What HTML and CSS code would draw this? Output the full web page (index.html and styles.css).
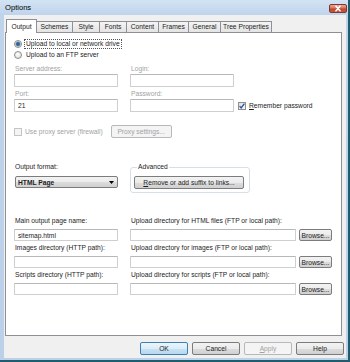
FILE: index.html
```html
<!DOCTYPE html>
<html>
<head>
<meta charset="utf-8">
<link rel="stylesheet" href="styles.css">
</head>
<body>
<div class="window">
  <div class="titlebar">
    <span class="title">Options</span>
    <span class="close"><svg width="18" height="9" viewBox="0 0 18 9"><path d="M7 2.2 L11 6.8 M11 2.2 L7 6.8" stroke="#fff" stroke-width="1.6" stroke-linecap="round"/></svg></span>
  </div>
  <div class="client">
    <div class="tabs">
      <div class="tab sel w-output">Output</div>
      <div class="tab w-schemes">Schemes</div>
      <div class="tab w-style">Style</div>
      <div class="tab w-fonts">Fonts</div>
      <div class="tab w-content">Content</div>
      <div class="tab w-frames">Frames</div>
      <div class="tab w-general">General</div>
      <div class="tab w-tree">Tree Properties</div>
    </div>
    <div class="panel">
      <div class="radios">
        <div class="opt"><span class="radio on"></span><span class="focus">Upload to local or network drive</span></div>
        <div class="opt"><span class="radio"></span><span class="optlabel">Upload to an FTP server</span></div>
      </div>
      <div class="ftp">
        <div class="lbl dis">Server address:</div>
        <div class="lbl dis">Login:</div>
        <div class="box"></div>
        <div class="cell"><div class="box w104"></div></div>
        <div class="lbl dis">Port:</div>
        <div class="lbl dis">Password:</div>
        <div class="box">21</div>
        <div class="cell"><div class="box w104"></div><span class="check on"><svg width="8" height="8" viewBox="0 0 8 8"><path d="M1.6 4.1 L3.2 6 L6.4 1.6" stroke="#2c4f9c" stroke-width="1.3" fill="none"/></svg></span><span class="chklabel"><u>R</u>emember password</span></div>
      </div>
      <div class="proxy">
        <span class="check dischk"></span><span class="chklabel2 dis">Use proxy server (firewall)</span>
        <span class="btn disbtn proxybtn">Proxy settings...</span>
      </div>
      <div class="fmt">
        <div class="fmtleft">
          <div class="lbl2">Output format:</div>
          <div class="select"><span class="seltext">HTML Page</span><svg width="5" height="3" viewBox="0 0 5 3"><path d="M0 0 H5 L2.5 3 Z" fill="#000"/></svg></div>
        </div>
        <fieldset class="group">
          <legend>Advanced</legend>
          <span class="btn suffixbtn"><u>R</u>emove or add suffix to links...</span>
        </fieldset>
      </div>
      <div class="dirs">
        <div class="lbl3">Main output page name:</div>
        <div class="lbl3">Upload directory for HTML files (FTP or local path):</div>
        <div class="cell2"><div class="box2">sitemap.html</div></div>
        <div class="cell2"><div class="box2 wide"></div><span class="btn browse">Browse...</span></div>
        <div class="lbl3">Images directory (HTTP path):</div>
        <div class="lbl3">Upload directory for images (FTP or local path):</div>
        <div class="cell2"><div class="box2"></div></div>
        <div class="cell2"><div class="box2 wide"></div><span class="btn browse">Browse...</span></div>
        <div class="lbl3">Scripts directory (HTTP path):</div>
        <div class="lbl3">Upload directory for scripts (FTP or local path):</div>
        <div class="cell2"><div class="box2"></div></div>
        <div class="cell2"><div class="box2 wide"></div><span class="btn browse">Browse...</span></div>
      </div>
    </div>
    <div class="buttons">
      <span class="btn dlg okbtn">OK</span>
      <span class="btn dlg">Cancel</span>
      <span class="btn dlg disbtn"><u>A</u>pply</span>
      <span class="btn dlg">Help</span>
    </div>
  </div>
</div>
</body>
</html>
```
FILE: styles.css
```css
* { box-sizing: border-box; margin: 0; padding: 0; }
html, body { width: 350px; height: 362px; overflow: hidden; }
body {
  background: #1f5d6d;
  font-family: "Liberation Sans", Arial, sans-serif;
  font-size: 6.7px;
  color: #1c1c1c;
}
u { text-decoration: underline; text-underline-offset: 1px; }

.window {
  width: 348px;
  height: 360px;
  background: linear-gradient(#d2e3f4, #bfd4eb 15px, #bcd1e9);
  display: flex;
  flex-direction: column;
  padding: 0 2px 2px 4px;
}
.titlebar {
  height: 15px;
  flex: none;
  display: flex;
  align-items: center;
  justify-content: space-between;
  padding-left: 1px;
}
.title { font-size: 7.6px; color: #000; }
.close {
  align-self: flex-start;
  margin-top: 4px;
  margin-right: -1px;
  width: 18px;
  height: 9px;
  border: 1px solid #7a3a2e;
  border-radius: 2px;
  background: linear-gradient(#e8a796, #d87561 45%, #c0452c 55%, #c9583c);
  display: flex;
}
.close svg { margin: -1px; }

.client {
  flex: 1;
  background: #f0f0f0;
  display: flex;
  flex-direction: column;
}
.tabs {
  margin-top: 4px;
  margin-left: 2px;
  height: 14px;
  display: flex;
  align-items: flex-end;
}
.tab {
  height: 12px;
  border: 1px solid #8e9095;
  background: linear-gradient(#f4f4f4, #e4e4e4);
  margin-left: -1px;
  display: flex;
  align-items: center;
  justify-content: center;
  white-space: nowrap;
  padding-bottom: 1px;
}
.tab.sel {
  height: 14px;
  margin-left: 0;
  background: #fff;
  border-bottom: none;
  position: relative;
  z-index: 1;
  padding-bottom: 1px;
}
.w-output { width: 31px; }
.w-schemes { width: 37px; }
.w-style { width: 28px; }
.w-fonts { width: 28px; }
.w-content { width: 33px; }
.w-frames { width: 31px; }
.w-general { width: 33px; }
.w-tree { width: 52px; }

.panel {
  margin: -1px 4px 0 1px;
  height: 304px;
  flex: none;
  background: #fff;
  border: 1px solid #8e9095;
  padding: 5px 9px 0 8px;
}
.radios { display: flex; flex-direction: column; }
.opt { height: 11px; display: flex; align-items: center; }
.radio {
  width: 8px;
  height: 8px;
  border-radius: 50%;
  border: 1px solid #8c8c8c;
  background: radial-gradient(circle at 45% 40%, #ffffff, #e2e2e2 70%, #cfcfcf);
  margin-right: 2px;
  flex: none;
}
.radio.on {
  background: radial-gradient(circle at 50% 50%, #2e5f8e 0, #3b6f9c 1.6px, #9fb8cf 2.4px, #f2f2f2 3px);
}
.focus { border: 1px dotted #555; padding: 0 1px; line-height: 8px; }
.optlabel { padding-left: 2px; }

.ftp {
  margin-top: 3px;
  display: grid;
  grid-template-columns: 104px 1fr;
  grid-template-rows: 11px 13px 12px 13px;
  column-gap: 12px;
}
.lbl { padding-left: 1px; display: flex; align-items: center; }
.dis { color: #a2a2a2; }
.box {
  height: 13px;
  border: 1px solid #cfcfcf;
  border-top-color: #b8b8b8;
  border-radius: 1px;
  background: #fff;
  padding-left: 3px;
  display: flex;
  align-items: center;
}
.w104 { width: 104px; flex: none; }
.cell { display: flex; align-items: center; }
.check {
  width: 8px;
  height: 8px;
  border: 1px solid #8f8f8f;
  background: linear-gradient(135deg, #dcdcdc, #fafafa);
  flex: none;
  display: flex;
}
.check svg { margin: -1px; }
.cell .check { margin-left: 4px; }
.chklabel { margin-left: 3px; }
.dischk { border-color: #c4c4c4; background: #f4f4f4; }
.chklabel2 { margin-left: 3px; }

.proxy {
  margin-top: 13px;
  height: 13px;
  display: flex;
  align-items: center;
}
.btn {
  border: 1px solid #7c7c7c;
  border-radius: 2px;
  background: linear-gradient(#f3f3f3 0, #ebebeb 50%, #dddddd 50%, #d0d0d0 100%);
  display: flex;
  align-items: center;
  justify-content: center;
  white-space: nowrap;
  flex: none;
}
.disbtn {
  border-color: #b5b9bc;
  background: #f4f4f4;
  color: #a2a2a2;
}
.proxybtn { margin-left: 8px; width: 61px; height: 13px; }

.fmt {
  margin-top: 24px;
  display: grid;
  grid-template-columns: 104px 120px;
  column-gap: 12px;
  align-items: start;
}
.lbl2 { height: 10px; line-height: 10px; padding-left: 1px; }
.select {
  margin-top: 4px;
  height: 12px;
  margin-left: 1px;
  border: 1px solid #7c7c7c;
  border-radius: 2px;
  background: linear-gradient(#f3f3f3 0, #ebebeb 50%, #dddddd 50%, #d0d0d0 100%);
  display: flex;
  align-items: center;
  justify-content: space-between;
  padding: 0 3px 0 2px;
}
.seltext { font-weight: bold; }
.group {
  border: 1px solid #d5dfe5;
  border-radius: 3px;
  padding: 4px 5px 3px 3px;
  min-width: 0;
}
.group legend {
  margin-left: 3px;
  padding: 0 1px;
  line-height: 10px;
  height: 10px;
}
.suffixbtn { width: 110px; height: 13px; }

.dirs {
  margin-top: 23px;
  display: grid;
  grid-template-columns: 104px 1fr;
  grid-template-rows: 13px 14px 13px 14px 13px 14px;
  column-gap: 12px;
}
.lbl3 { line-height: 10px; padding-left: 1px; white-space: nowrap; }
.cell2 { display: flex; align-items: flex-start; }
.box2 {
  width: 104px;
  height: 12px;
  border: 1px solid #cfcfcf;
  border-top-color: #b8b8b8;
  border-radius: 1px;
  background: #fff;
  padding-left: 3px;
  display: flex;
  align-items: center;
}
.box2.wide { width: 166px; }
.browse { width: 33px; height: 12px; margin-left: 3px; }

.buttons {
  margin-top: 6px;
  display: flex;
  justify-content: flex-end;
  gap: 4px;
  padding-right: 2px;
}
.dlg { width: 48px; height: 13px; }
.okbtn {
  border-color: #3c7fb1;
  background: linear-gradient(#eaf5fc 0, #dcedf8 50%, #c8e3f4 50%, #b6d8ef 100%);
}
```
